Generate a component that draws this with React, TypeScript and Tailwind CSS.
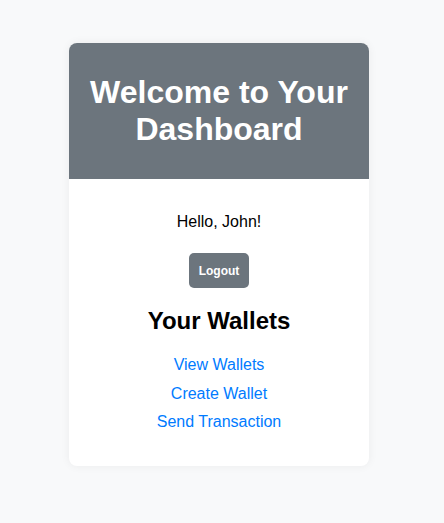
export default function App() {
  const links = ['View Wallets', 'Create Wallet', 'Send Transaction'];

  return (
    <div className="min-h-screen w-full bg-[#f8f9fa] pt-[43px] font-['Liberation_Sans',Arial,sans-serif]">
      <div className="ml-[69px] w-[300px] overflow-hidden rounded-lg bg-white shadow-[0_0_10px_rgba(0,0,0,0.06)]">
        {/* Header */}
        <div className="bg-[#6c757d] px-5 py-[31px] text-center">
          <h1 className="text-[32px] font-bold leading-[37px] text-white">Welcome to Your Dashboard</h1>
        </div>

        {/* Body */}
        <div className="flex flex-col items-center px-5 pt-[34px] pb-[35px] text-center">
          <p className="text-base leading-[18px] text-black">Hello, John!</p>
          <button className="mt-[22px] h-[35px] rounded-[5px] bg-[#6c757d] px-[10px] text-[12px] font-bold text-white">
            Logout
          </button>
          <h2 className="mt-[19px] text-2xl leading-[28px] font-bold text-black">Your Wallets</h2>
          <div className="mt-[21px] flex flex-col items-center gap-[10.5px]">
            {links.map((l) => (
              <a key={l} href="#" className="text-base leading-[18px] text-[#007bff]">
                {l}
              </a>
            ))}
          </div>
        </div>
      </div>
    </div>
  );
}
